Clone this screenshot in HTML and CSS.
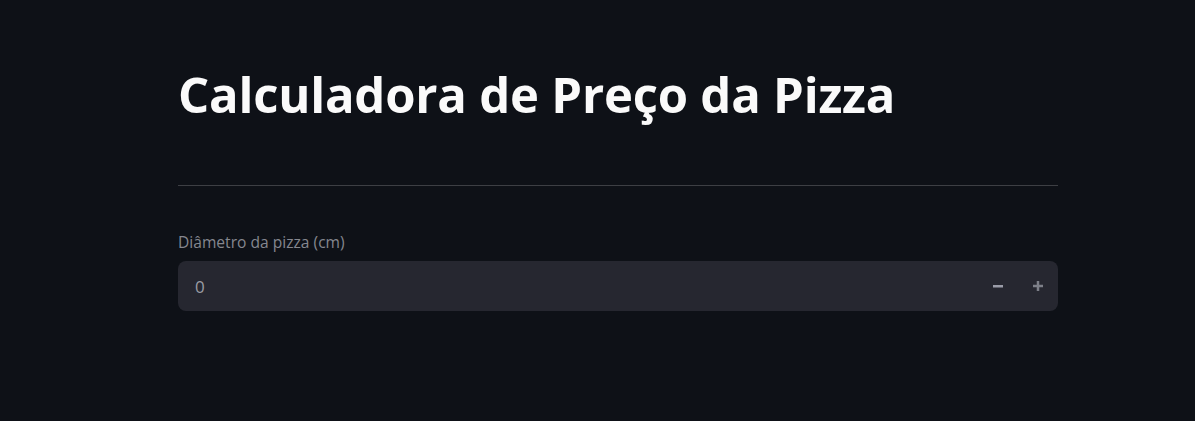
FILE: index.html
```html
<!DOCTYPE html>
<html lang="pt">
<head>
<meta charset="utf-8">
<link rel="stylesheet" href="styles.css">
</head>
<body>
<main class="app">
  <div class="block">
    <h1 class="title">Calculadora de Preço da Pizza</h1>
    <hr class="divider">
    <div class="field">
      <label class="label">Diâmetro da pizza (cm)</label>
      <div class="number-input">
        <span class="value">0</span>
        <div class="steps">
          <button class="step minus" aria-label="menos">
            <svg width="12" height="12" viewBox="0 0 12 12"><rect x="1" y="5" width="10" height="2.5" fill="currentColor"/></svg>
          </button>
          <button class="step plus" aria-label="mais">
            <svg width="12" height="12" viewBox="0 0 12 12"><rect x="1" y="4.75" width="10" height="2.5" fill="currentColor"/><rect x="4.75" y="1" width="2.5" height="10" fill="currentColor"/></svg>
          </button>
        </div>
      </div>
    </div>
  </div>
</main>
</body>
</html>
```
FILE: styles.css
```css
html, body {
  margin: 0;
  padding: 0;
  background: #0e1117;
  color: #fafafa;
  font-family: "Open Sans", "Noto Sans", sans-serif;
}
.app {
  display: flex;
  padding: 60px 0 0 178px;
  min-height: 421px;
  box-sizing: border-box;
}
.block {
  width: 880px;
  display: flex;
  flex-direction: column;
}
.title {
  margin: 0;
  font-size: 49px;
  font-weight: 700;
  line-height: 68px;
  letter-spacing: -0.2px;
  color: #fafafa;
}
.divider {
  margin: 57px 0 0 0;
  border: none;
  border-top: 1px solid rgba(250, 250, 250, 0.2);
  height: 0;
}
.field {
  margin-top: 45px;
  display: flex;
  flex-direction: column;
}
.label {
  font-size: 15.6px;
  color: #85878f;
  line-height: 22px;
  margin-bottom: 8px;
}
.number-input {
  height: 50px;
  background: #262730;
  border-radius: 8px;
  display: flex;
  align-items: center;
  justify-content: space-between;
  padding-left: 17px;
}
.value {
  font-size: 17px;
  color: #9a9ca4;
}
.steps {
  display: flex;
  height: 100%;
}
.step {
  width: 40px;
  height: 100%;
  background: transparent;
  border: none;
  display: flex;
  align-items: center;
  justify-content: center;
  padding: 0;
}
.minus { color: #9a9ca8; }
.plus { color: #7d7f88; }
```
